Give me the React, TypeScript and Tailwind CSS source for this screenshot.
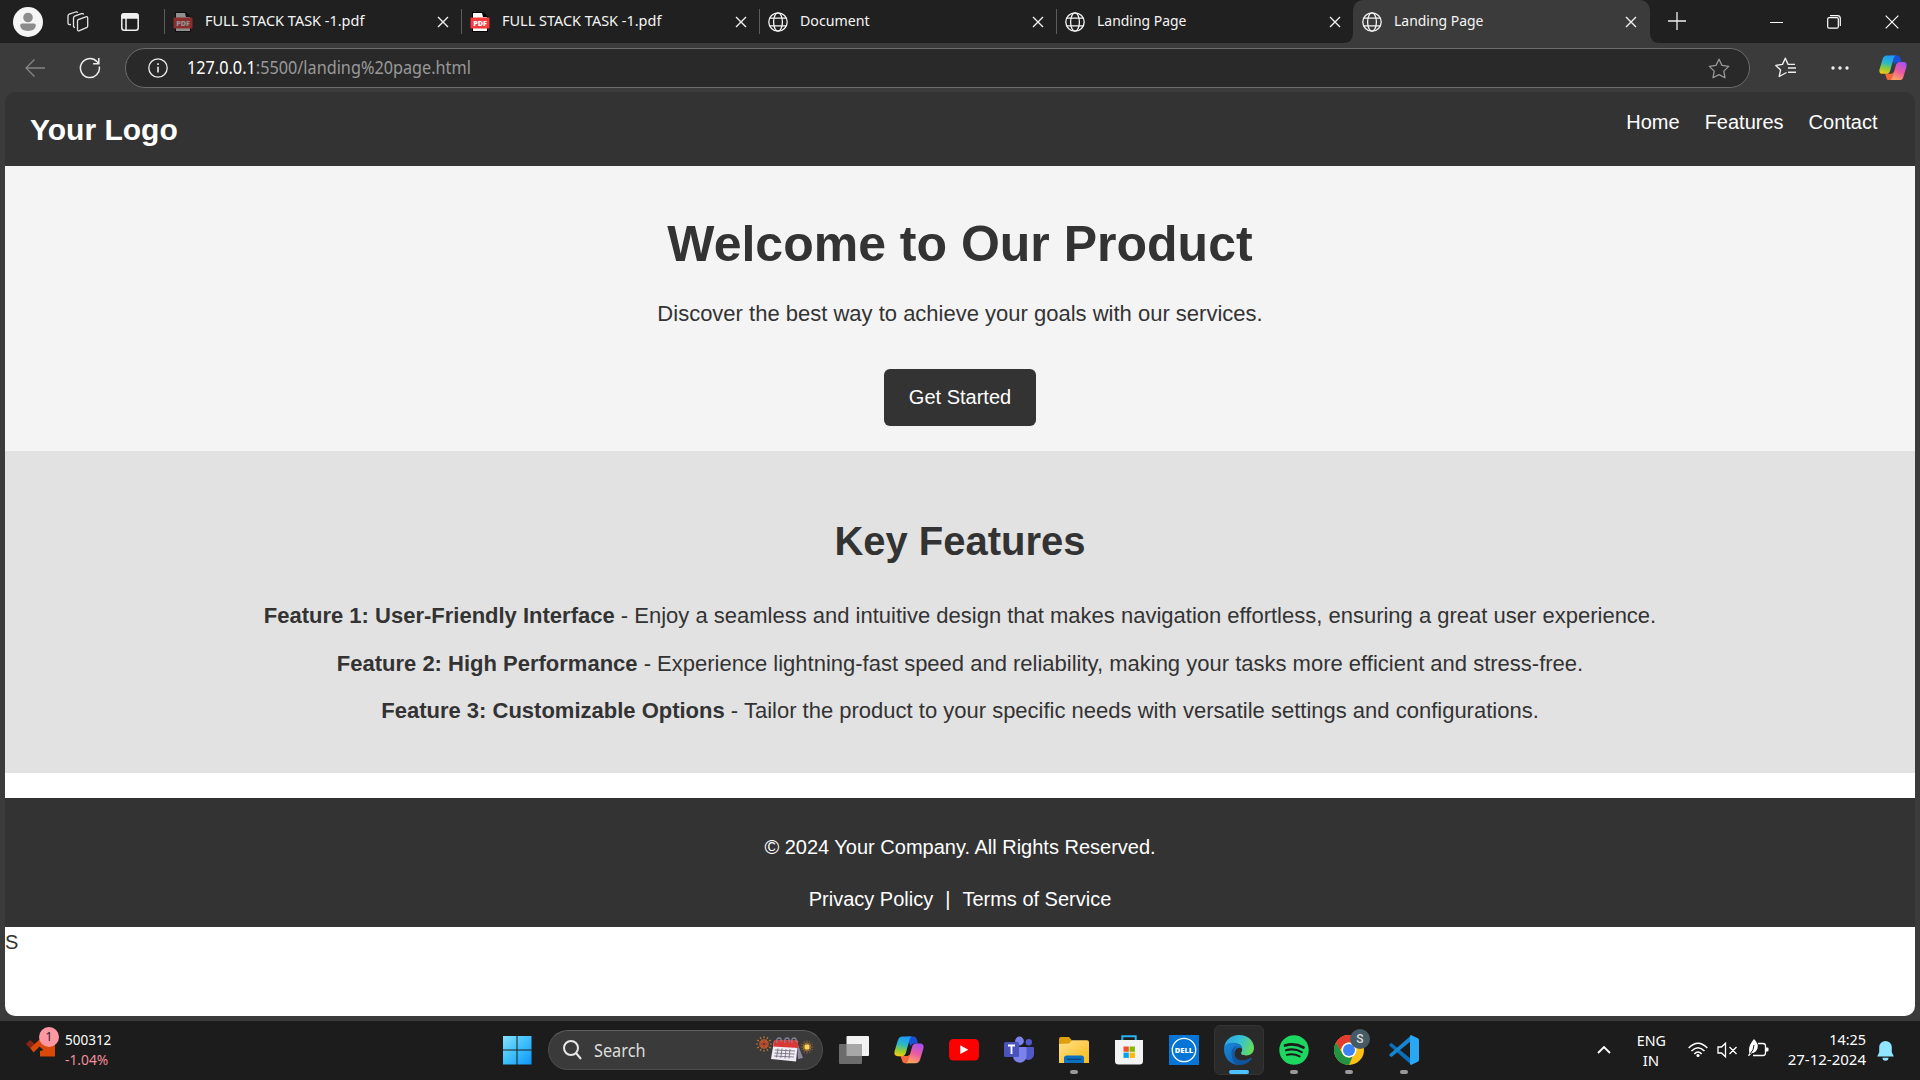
import React from "react";

const Close = () => (
  <svg width="12" height="12" viewBox="0 0 12 12" className="shrink-0" stroke="#f0f0f0" strokeWidth="1.4"><path d="M1 1l10 10M11 1L1 11" /></svg>
);

const Globe = () => (
  <svg width="20" height="20" viewBox="0 0 20 20" className="shrink-0" fill="none" stroke="#f4f4f4" strokeWidth="1.3">
    <circle cx="10" cy="10" r="9.2" /><ellipse cx="10" cy="10" rx="4.4" ry="9.2" /><path d="M1.8 6.2h16.4M1.8 13.8h16.4" />
  </svg>
);

const Pdf = ({ dim }: { dim?: boolean }) => (
  <svg width="20" height="20" viewBox="0 0 20 20" className={dim ? "shrink-0 opacity-50" : "shrink-0"}>
    <path d="M2 0h11l5 5v15H2z" fill="#000" /><path d="M3 1h9l1 4h4v14H3z" fill="#fff" />
    <rect x="0.5" y="5.5" width="19" height="11" rx="1" fill="#f53b3b" />
    <text x="10" y="13.8" textAnchor="middle" fontFamily="Open Sans, sans-serif" fontWeight="800" fontSize="7.2" fill="#fff">PDF</text>
  </svg>
);

const Copilot = ({ size, id }: { size: number; id: string }) => (
  <svg width={size} height={size * 0.92} viewBox="0 0 30 27.6" className="shrink-0">
    <defs>
      <linearGradient id={id + "a"} x1="0.5" y1="0" x2="0.3" y2="1"><stop offset="0" stopColor="#1f9af5" /><stop offset="0.4" stopColor="#2bb8c9" /><stop offset="0.7" stopColor="#8ccb3c" /><stop offset="1" stopColor="#f7c90e" /></linearGradient>
      <linearGradient id={id + "b"} x1="0.7" y1="0" x2="0.3" y2="1"><stop offset="0" stopColor="#a852ee" /><stop offset="0.5" stopColor="#ee5aa0" /><stop offset="1" stopColor="#fdaa5c" /></linearGradient>
    </defs>
    <path d="M12 .5h7.500c2 0 3 1.500 3.500 3.200l1 3.900h-3.600c-2 0-3 1-3.600 3z" fill="#1a50d8" />
    <path d="M6.500 20h7.200l4.500-3-2 8c-.5 1.600-1.500 2.200-3 2.200H11c-2 0-2.600-1.200-3.200-3.200z" fill="#f2683c" />
    <path d="M8.500.5h9.700c-1.700.5-2.300 2-3 4.500l-3.200 11.500c-.7 2.400-1.800 3.700-4.300 3.700H3.500C1 20.200-.2 18 .6 15.200L3.800 4.500C4.700 1.700 6 .5 8.500.5z" fill={"url(#" + id + "a)"} />
    <path d="M21.500 27.200h-9.700c1.700-.5 2.300-2 3-4.500L18 11.200c.7-2.400 1.800-3.700 4.300-3.700h4.200c2.500 0 3.700 2.200 2.900 5l-3.200 10.700c-.9 2.800-2.200 4-4.700 4z" fill={"url(#" + id + "b)"} />
  </svg>
);

const tabs = [
  { title: "FULL STACK TASK -1.pdf", icon: <Pdf dim />, fit: "scale-x-[0.965]" },
  { title: "FULL STACK TASK -1.pdf", icon: <Pdf />, fit: "scale-x-[0.965]" },
  { title: "Document", icon: <Globe />, fit: "scale-x-[0.945]" },
  { title: "Landing Page", icon: <Globe />, fit: "scale-x-[0.93]" },
];

function TabBar() {
  return (
    <div className="flex h-[43px] items-start bg-[#202020]">
      <div className="flex h-[43px] w-[164px] shrink-0 items-center pl-[13px]">
        <svg width="30" height="30" viewBox="0 0 30 30"><circle cx="15" cy="15" r="15" fill="#f5f5f5" /><circle cx="15" cy="10.500" r="4.800" fill="#8c8c8c" /><path d="M9 16.500h12a1.800 1.800 0 0 1 1.800 1.800c0 3.800-3.500 5.700-7.800 5.700s-7.800-1.900-7.800-5.700A1.800 1.800 0 0 1 9 16.500z" fill="#8c8c8c" /></svg>
        <svg className="ml-6" width="22" height="21" viewBox="0 0 22 21" fill="none" stroke="#e4e4e4" strokeWidth="1.3" strokeLinejoin="round"><path d="M11.200 8.600 18.800 5.800q1.900-.5 1.900 1.200v8q0 1.200-1.200 1.700l-7 3q-2 .7-2-1.200v-8q0-1.300.7-1.900z" /><path d="M8 16.500q-1.500 0-1.500-1.500V7q0-1.300 1.200-1.800l6.800-2.500q1.700-.5 2 1" /><path d="M4 13.500q-3 .5-3-1.500V5q0-1.300 1.200-1.800L8.500 1q1.700-.5 2 .8" /></svg>
        <svg className="ml-8" width="18" height="18" viewBox="0 0 18 18" fill="none" stroke="#f0f0f0" strokeWidth="1.500"><rect x=".8" y=".8" width="16.400" height="16.400" rx="2.500" /><path d="M1 3q0-2 2-2h12q2 0 2 2v2H1z" fill="#f0f0f0" /><path d="M5 5v12" /></svg>
      </div>
      {tabs.map((t, i) => (
        <div key={i} className="mt-[9px] flex h-[25px] w-[297.300px] shrink-0 items-center border-l border-[#5c5c5c] pl-2 pr-3">
          {t.icon}
          <span className="ml-3 flex-1 -translate-y-[2px] whitespace-nowrap text-[15px] leading-5 text-[#f5f5f5]"><span className={"inline-block origin-left " + t.fit}>{t.title}</span></span>
          <Close />
        </div>
      ))}
      <div className="relative flex h-[43px] w-[297px] shrink-0 items-center rounded-t-[10px] bg-[#3b3b3b] pl-[9px] pr-[13px]">
        <svg className="absolute -left-[10px] bottom-0" width="10" height="10"><path d="M10 0v10H0Q10 10 10 0z" fill="#3b3b3b" /></svg>
        <svg className="absolute -right-[10px] bottom-0" width="10" height="10"><path d="M0 0v10h10Q0 10 0 0z" fill="#3b3b3b" /></svg>
        <Globe />
        <span className="ml-3 flex-1 -translate-y-[2px] text-[15px] leading-5 text-[#f5f5f5]"><span className="inline-block origin-left scale-x-[0.93]">Landing Page</span></span>
        <Close />
      </div>
      <div className="flex h-[43px] flex-1 items-center">
        <svg className="-mt-px ml-[18px]" width="18" height="18" viewBox="0 0 18 18" stroke="#eee" strokeWidth="1.300"><path d="M9 0v18M0 9h18" /></svg>
        <svg className="ml-[84px]" width="13" height="14" stroke="#fff"><path d="M0 7.500h13" /></svg>
        <svg className="ml-11" width="14" height="14" viewBox="0 0 14 14" fill="none" stroke="#fff" strokeWidth="1.200"><rect x=".7" y="2.600" width="10.600" height="10.600" rx="1.500" /><path d="M3 .7h7.500q2.800 0 2.800 2.800V11" /></svg>
        <svg className="ml-11" width="14" height="14" viewBox="0 0 14 14" stroke="#fff" strokeWidth="1.200"><path d="M.7.7l12.600 12.600M13.300.7L.7 13.300" /></svg>
      </div>
    </div>
  );
}

function AddressBar() {
  return (
    <div className="flex h-[49px] items-start bg-[#3b3b3b] pt-[5px]">
      <div className="flex h-[39px] w-[125px] shrink-0 items-center pl-[25px]">
        <svg width="20" height="18" viewBox="0 0 20 18" fill="none" stroke="#858585" strokeWidth="1.300"><path d="M20 9H1M9.500.5L1 9l8.500 8.500" /></svg>
        <svg className="ml-[34px]" width="22" height="22" viewBox="0 0 22 22" fill="none" stroke="#eee" strokeWidth="1.500"><path d="M20.300 9.500A9.500 9.500 0 1 1 17.800 4.500L19.500 6M19.800 1v5.700h-5.700" /></svg>
      </div>
      <div className="flex h-10 w-[1625px] shrink-0 items-center rounded-full border border-[#6c6c6c] bg-[#292929] pl-[22px] pr-[19px]">
        <svg width="20" height="20" viewBox="0 0 20 20" fill="none" stroke="#eee" strokeWidth="1.300"><circle cx="10" cy="10" r="9.200" /><path d="M10 8.700V14.500M10 5.200v1.700" strokeWidth="1.600" /></svg>
        <span className="ml-[19px] flex-1 -translate-y-px text-[17.500px] leading-6 text-[#999]"><span className="inline-block origin-left scale-x-[0.928]"><span className="text-white">127.0.0.1</span>:5500/landing%20page.html</span></span>
        <svg width="22" height="21" viewBox="0 0 22 21" fill="none" stroke="#999" strokeWidth="1.300" strokeLinejoin="round"><path d="M11 1.200l3 6.200 6.700 1-4.900 4.700 1.200 6.700-6-3.200-6 3.200 1.200-6.700L1.300 8.400l6.700-1z" /></svg>
      </div>
      <div className="flex h-[39px] flex-1 items-center">
        <svg className="ml-[25px]" width="21" height="21" viewBox="0 0 21 21" fill="none" stroke="#eee" strokeWidth="1.400" strokeLinejoin="round"><path d="M11.500 15.500L4.200 19.500l1.400-6.600L.8 8.400l6.700-1L10.300 1.200l2.800 6.200H20M13 11h8M13 15.300h8" /></svg>
        <svg className="ml-[35px]" width="18" height="4" fill="#eee"><circle cx="2" cy="2" r="1.700" /><circle cx="9" cy="2" r="1.700" /><circle cx="16" cy="2" r="1.700" /></svg>
        <div className="ml-[30px]"><Copilot size={28} id="bar" /></div>
      </div>
    </div>
  );
}

const features = [
  ["Feature 1: User-Friendly Interface", "Enjoy a seamless and intuitive design that makes navigation effortless, ensuring a great user experience."],
  ["Feature 2: High Performance", "Experience lightning-fast speed and reliability, making your tasks more efficient and stress-free."],
  ["Feature 3: Customizable Options", "Tailor the product to your specific needs with versatile settings and configurations."],
];

function Landing() {
  return (
    <div className="h-[929px] bg-[#3b3b3b] px-[5px]">
      <div className="flex h-[923.500px] flex-col font-['Liberation_Sans',Arial,sans-serif] text-[20px] text-[#333]">
        <header className="flex h-[74px] shrink-0 justify-between rounded-t-[10px] bg-[#333] pl-[25px] pr-[37.500px] text-white">
          <div className="pt-[21px] text-[30px] font-bold leading-[34px]">Your Logo</div>
          <nav className="flex gap-[25px] pt-[18px] leading-6"><a>Home</a><a>Features</a><a>Contact</a></nav>
        </header>
        <section className="flex h-[285px] shrink-0 flex-col items-center bg-[#f4f4f4]">
          <h1 className="mt-[50px] text-[50px] font-bold leading-[56px]">Welcome to Our Product</h1>
          <p className="mt-[29px] text-[22px] leading-[26px]">Discover the best way to achieve your goals with our services.</p>
          <button className="mt-[42px] h-[57px] w-[152px] rounded-[6px] bg-[#333] pb-[2px] text-white">Get Started</button>
        </section>
        <section className="flex h-[322px] shrink-0 flex-col items-center bg-[#e2e2e2]">
          <h2 className="mt-[67px] text-[40px] font-bold leading-[46px]">Key Features</h2>
          <div className="mt-[39px] flex flex-col items-center gap-[21.500px] text-[22px] leading-[26px]">
            {features.map(([a, b]) => <p key={a}><strong>{a}</strong> - {b}</p>)}
          </div>
        </section>
        <div className="h-[25px] shrink-0 bg-white" />
        <footer className="flex h-[129px] shrink-0 flex-col items-center bg-[#333] text-white">
          <p className="mt-[37px] leading-6">© 2024 Your Company. All Rights Reserved.</p>
          <p className="mt-[28px] flex gap-3 leading-6"><a>Privacy Policy</a><span>|</span><a>Terms of Service</a></p>
        </footer>
        <p className="flex-1 rounded-b-[10px] bg-white pt-[3px] leading-6">S</p>
      </div>
    </div>
  );
}

const Win = () => (
  <svg width="30" height="30" viewBox="0 0 30 30"><defs><linearGradient id="win" x1="0" y1="0" x2="30" y2="30" gradientUnits="userSpaceOnUse"><stop offset="0" stopColor="#8be2ff" /><stop offset=".5" stopColor="#3dc0fb" /><stop offset="1" stopColor="#0e93f8" /></linearGradient></defs><path d="M1 1h13.500v13.500H1zM15.500 1H29.500v13.500H15.500zM1 15.500h13.500V29.500H1zM15.500 15.500H29.500V29.500H15.500z" fill="url(#win)" /></svg>
);

const TaskView = () => (
  <svg width="30" height="30" viewBox="0 0 30 30"><rect x="7.500" y="1" width="22.500" height="20" rx="1" fill="#f2f2f2" /><rect x="0" y="9" width="23" height="20" rx="1" fill="#6c6c6c" /><path d="M7.500 9H23v12H7.500z" fill="#a7a7a7" /></svg>
);

const YouTube = () => (
  <svg width="30" height="30" viewBox="0 0 30 30"><rect y="4" width="30" height="21.500" rx="4.500" fill="#f00" /><path d="M11.300 10.300v8.800l8-4.400z" fill="#fff" /></svg>
);

const Teams = () => (
  <svg width="30" height="30" viewBox="0 0 30 30"><circle cx="24.800" cy="7.300" r="3.200" fill="#5059c9" /><circle cx="15.500" cy="6" r="4.400" fill="#7b83eb" /><path d="M21.500 12H29q1 0 1 1v6.500a5.500 5.500 0 0 1-8.500 4.500z" fill="#5059c9" /><path d="M9 12h12.500q1 0 1 1v8a6.700 6.700 0 0 1-13.500 0z" fill="#7b83eb" /><rect y="7" width="15" height="15" rx="1.500" fill="#4a53bc" /><path d="M4 10.500h7M7.500 10.500v8.500" stroke="#fff" strokeWidth="1.800" /></svg>
);

const Folder = () => (
  <svg width="30" height="30" viewBox="0 0 30 30"><defs><linearGradient id="fold" x1="0" y1="0" x2="1" y2="1"><stop stopColor="#ffe08a" /><stop offset="1" stopColor="#fbbb17" /></linearGradient></defs><path d="M0 4q0-2 2-2h8l3 3.500V9H0z" fill="#e0a00b" /><path d="M0 9l10-.5L13 5.300h15q2 0 2 2V28H0z" fill="url(#fold)" /><path d="M5 28v-5q0-2.500 2.500-2.500h15Q25 20.500 25 23v5z" fill="#0c70c0" /><path d="M8 24.300h14" stroke="#0a4677" strokeWidth="1.300" /></svg>
);

const Store = () => (
  <svg width="30" height="30" viewBox="0 0 30 30"><path d="M8.300 6V1.300h13.400V6" fill="none" stroke="#27b3f2" strokeWidth="2" /><path d="M1 5h28v21q0 3.500-3.500 3.500h-21Q1 29.500 1 26z" fill="#f3f3f3" /><path d="M9.500 11.500h5.300v5.300H9.500z" fill="#f25022" /><path d="M15.600 11.500h5.300v5.300h-5.300z" fill="#7fba00" /><path d="M9.500 17.600h5.300v5.300H9.500z" fill="#00a4ef" /><path d="M15.600 17.600h5.300v5.300h-5.300z" fill="#ffb900" /></svg>
);

const Dell = () => (
  <svg width="30" height="30" viewBox="0 0 30 30"><path d="M0 0h30v30H0z" fill="#0676d6" /><circle cx="15" cy="15" r="11.700" fill="none" stroke="#fff" strokeWidth="1.300" /><text x="15" y="17.600" textAnchor="middle" textLength="18.500" lengthAdjust="spacingAndGlyphs" fontFamily="Open Sans, sans-serif" fontWeight="800" fontSize="7.200" fill="#fff">DELL</text></svg>
);

const Edge = () => (
  <svg width="30" height="30" viewBox="0 0 30 30"><defs><linearGradient id="eg1" x1="0" y1=".3" x2="1" y2=".6"><stop stopColor="#2aa5e4" /><stop offset=".5" stopColor="#35c1d5" /><stop offset="1" stopColor="#68dc56" /></linearGradient><linearGradient id="eg2" x1="0" y1="0" x2="1" y2="1"><stop stopColor="#1a87dc" /><stop offset="1" stopColor="#0c59a4" /></linearGradient></defs><path d="M0 14C.5 5 7 0 15 0c9 0 15 6 15 12.700 0 5-3.500 7.700-7.600 7.700-4.200 0-5.400-1.200-5.400-2.100 0-.9 1.200-1.300 1.200-3.700C18.200 10 14 8 9.500 8 4 8 0 11 0 14z" fill="url(#eg1)" /><path d="M0 14c0-3.500 4-6.300 9-6.300 3.500 0 9 2 9 6-2.500-2.300-7.500-.3-7.500 5 0 6.500 7.500 8.500 13.500 5.600 2-1 3.400-1.700 4-1C26 27 21 30 15 30 6 30 0 23 0 14z" fill="url(#eg2)" /><path d="M7.500 18c0-4 3-7 6-7-4 3-4.500 9-.5 12.300 4 3.200 10 2.400 15 0C23 30 18 30 15 30c-5 0-7.500-7-7.500-12z" fill="#134b8f" opacity=".65" /></svg>
);

const Spotify = () => (
  <svg width="30" height="30" viewBox="0 0 30 30"><circle cx="15" cy="15" r="14.700" fill="#1ed760" /><g fill="none" stroke="#1b1b1b" strokeLinecap="round"><path d="M6 10.500q9.500-2.800 18.500 2" strokeWidth="2.700" /><path d="M7 15.300q8.500-2.300 15.700 1.800" strokeWidth="2.200" /><path d="M7.700 19.800q7-1.700 13 1.600" strokeWidth="1.900" /></g></svg>
);

const Chrome = () => (
  <svg width="30" height="30" viewBox="0 0 30 30"><circle cx="15" cy="15" r="15" fill="#fbc116" /><path d="M2 7.500A15 15 0 0 1 28 7.500H15a7.500 7.500 0 0 0-6.500 3.700L6 15z" fill="#e33b2e" /><path d="M2 7.500l6.500 11.300A7.500 7.500 0 0 0 15 22.500q1.600 0 3.500-.8L15 30A15 15 0 0 1 2 7.500z" fill="#229342" /><circle cx="15" cy="15" r="7.500" fill="#fff" /><circle cx="15" cy="15" r="6" fill="#3b82f6" /></svg>
);

const Code = () => (
  <svg width="30" height="30" viewBox="0 0 30 30"><path d="M2.500 8L22 24v5.500L.8 11q-1-1 0-2z" fill="#0a70bd" /><path d="M2.500 22L22 6V.5L.8 19q-1 1 0 2z" fill="#1685d3" /><path d="M22 0l6.800 3.200Q30 4 30 5v20q0 1-1.200 1.800L22 30l-1-1V1z" fill="#2aa7f2" /></svg>
);

const apps = [
  { icon: <TaskView /> }, { icon: <Copilot size={30} id="task" /> }, { icon: <YouTube /> }, { icon: <Teams /> },
  { icon: <Folder />, open: true }, { icon: <Store /> }, { icon: <Dell /> }, { icon: <Edge />, active: true },
  { icon: <Spotify />, open: true }, { icon: <Chrome />, open: true, badge: "S" }, { icon: <Code />, open: true },
];

const rays = [0, 30, 60, 90, 120, 150, 180, 210, 240, 270, 300, 330];

const Festive = () => (
  <svg width="58" height="28" viewBox="0 0 58 28" className="shrink-0">
    <g stroke="#cf7a2e" strokeWidth="1.200" strokeDasharray="2.500 1">{rays.map((r) => <path key={r} d="M8 5.500V.2" transform={`rotate(${r} 8 8)`} />)}</g>
    <g stroke="#b8452c" strokeWidth="1">{rays.map((r) => <path key={r} d="M8 7V3.500" transform={`rotate(${r + 15} 8 8)`} />)}</g>
    <path d="M41 6l6 16-5 1z" fill="#8c86a0" /><path d="M18 5h24l-2 20.500L15 23z" fill="#f0ecf6" /><path d="M18.500 4h23l1 8-25.500-1.500z" fill="#d93835" />
    <path d="M19 14l20 1M18.500 17l20 1M18 20l20 1M22 12.500l-1.500 9M26 12.500l-1.200 9.500M30 13l-1 9.500M34 13l-1 9.500" stroke="#77727f" strokeWidth=".9" />
    <g fill="none" stroke="#88849c" strokeWidth="1.300"><path d="M21 7q-1-5 2-5t2 4M29 7q-1-5 2-5t2 4M36 7q-1-5 2-5t2 4" /></g>
    <g stroke="#d08a2c" strokeWidth="1.100" strokeDasharray="1.500 1">{rays.map((r) => <path key={r} d="M51 8V4.800" transform={`rotate(${r} 51 11)`} />)}</g><circle cx="51" cy="11" r="2.700" fill="#ffd052" />
  </svg>
);

function Taskbar() {
  return (
    <div className="flex h-[59px] bg-[#1c1c1c] text-[15px] text-white">
      <div className="flex w-[502px] shrink-0 pl-[25px] pt-[6px]">
        <div className="relative h-[34px] w-[40px]">
          <svg className="absolute left-0 top-[8px]" width="31" height="24" viewBox="0 0 31 24"><path d="M1 9l4-4 6 5-3.500 6z" fill="#8c2415" /><path d="M5.500 13L15 4l6 4 9-1v14.500H15V16l3.500-1-4-3.500-6 6z" fill="#db4908" /></svg>
          <span className="absolute left-[14px] top-0 flex size-5 items-center justify-center rounded-full bg-[#ff97a3] text-[12px] text-[#222]">1</span>
        </div>
        <div className="mt-[2px] leading-5"><div className="origin-left scale-x-[0.9]">500312</div><div className="origin-left scale-x-[0.92] text-[#f18d9c]">-1.04%</div></div>
      </div>
      <div className="flex w-[46px] shrink-0 items-center pb-px"><Win /></div>
      <div className="mt-[9px] flex h-10 w-[275px] shrink-0 items-center rounded-full border border-[#4c4c4c] border-t-[#5e5e5e] bg-[#3a3a3a] pl-[14px] pr-[8px]">
        <svg width="19" height="20" viewBox="0 0 19 20" fill="none" stroke="#e8e8e8" strokeWidth="2"><circle cx="8" cy="8" r="7" /><path d="M13 13l5 6" /></svg>
        <span className="ml-3 flex-1 text-[17.500px] text-[#ddd]"><span className="inline-block origin-left scale-x-[0.93]">Search</span></span>
        <Festive />
      </div>
      <div className="ml-[3.500px] flex shrink-0">
        {apps.map((a, i) => (
          <div key={i} className="flex w-[55px] justify-center pt-1">
            <div className={a.active ? "relative flex h-[50px] w-[50px] items-center justify-center rounded-[6px] border border-[#343434] bg-[#2a2a2a]" : "relative flex h-[50px] w-[50px] items-center justify-center"}>
              {a.icon}
              {a.open && <span className="absolute bottom-[1px] h-1 w-2 rounded-full bg-[#999]" />}
              {a.active && <span className="absolute bottom-0 h-1 w-5 rounded-full bg-[#4cc2ff]" />}
              {a.badge && <span className="absolute right-[4px] top-[4px] flex size-5 items-center justify-center rounded-full bg-[#455a64] font-[Roboto] text-[12px] font-medium text-[#ddd]">{a.badge}</span>}
            </div>
          </div>
        ))}
      </div>
      <div className="flex flex-1 items-start justify-end pr-[26px] pt-[9px]">
        <svg className="mt-[15px]" width="14" height="9" viewBox="0 0 14 9" fill="none" stroke="#fff" strokeWidth="1.800"><path d="M1 8l6-6 6 6" /></svg>
        <div className="ml-[25px] w-[30px] text-center leading-5"><div className="scale-x-[0.95]">ENG</div><div>IN</div></div>
        <svg className="ml-[22px] mt-3" width="20" height="16" viewBox="0 0 20 16" fill="none" stroke="#fff" strokeWidth="1.500"><path d="M.7 6q9.300-9.500 18.600 0M3.500 9q6.500-6.700 13 0M6.300 12q3.700-4 7.400 0" /><circle cx="10" cy="13.500" r="1.600" fill="#fff" stroke="none" /></svg>
        <svg className="ml-[9px] mt-3" width="21" height="16" viewBox="0 0 21 16" fill="none" stroke="#fff" strokeWidth="1.300"><path d="M1 5h3.500l4-3.800v13.600L4.500 11H1zM12.500 5l7 7M19.500 5l-7 7" /></svg>
        <svg className="ml-[10px] mt-[9px]" width="21" height="18" viewBox="0 0 21 18"><path d="M10 4.500h5q2.500 0 2.500 2.500v7q0 2.500-2.500 2.500H5" fill="none" stroke="#fff" strokeWidth="1.300" /><path d="M18 8.500h1.500q1 0 1 1v2q0 1-1 1H18z" fill="#fff" /><path d="M0 17Q2 14 1 10.500 1 6 6 0q5 5 3.500 9.500Q7.500 14 4 14l-3 3z" fill="#fff" /><path d="M2 15Q6 11 6 6" stroke="#1c1c1c" fill="none" /></svg>
        <div className="-mt-px ml-[19px] w-[78px] whitespace-nowrap text-right leading-5"><div className="origin-right scale-x-[0.96]">14:25</div><div className="flex justify-end">27-12-2024</div></div>
        <svg className="ml-[11px] mt-[11px]" width="17" height="20" viewBox="0 0 17 20" fill="#90e5ff"><path d="M8.500 0a6.300 6.300 0 0 1 6.300 6.300v5l2 4.200H.2l2-4.200v-5A6.300 6.300 0 0 1 8.500 0zM5.500 16.800h6a3 3 0 0 1-6 0z" /></svg>
      </div>
    </div>
  );
}

export default function App() {
  return (
    <div className="h-[1080px] w-[1920px] overflow-hidden bg-[#3b3b3b] font-['Noto_Sans',sans-serif]">
      <TabBar />
      <AddressBar />
      <Landing />
      <Taskbar />
    </div>
  );
}
